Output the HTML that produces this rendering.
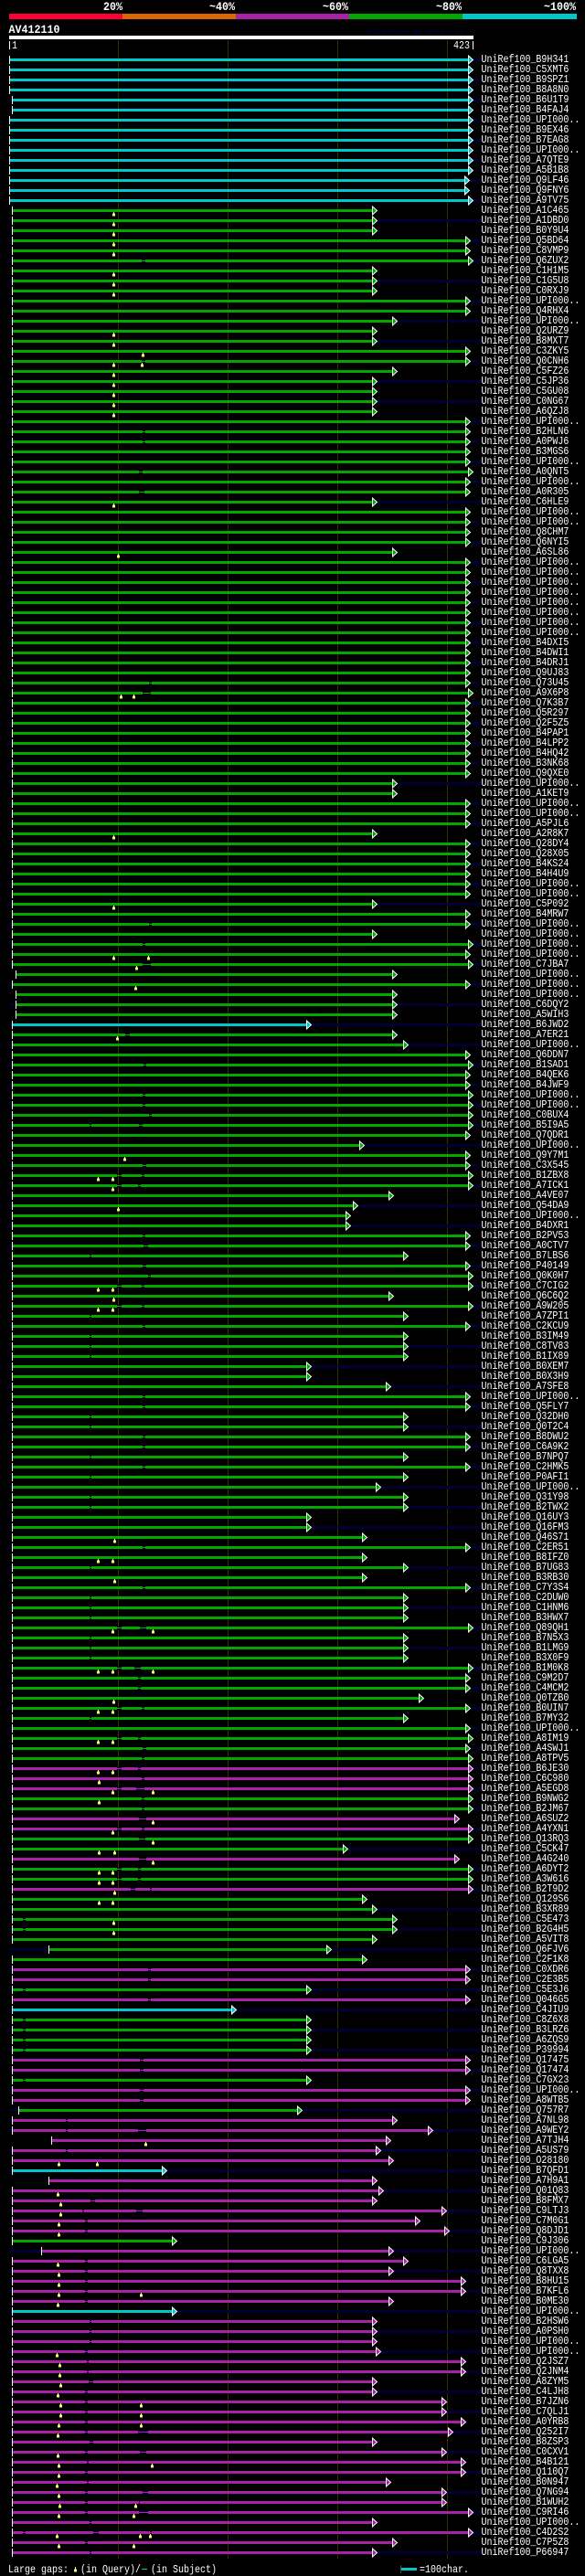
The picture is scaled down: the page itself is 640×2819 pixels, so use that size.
<!DOCTYPE html>
<html><head><meta charset="utf-8"><title>AV412110</title>
<style>
html,body{margin:0;padding:0;background:#000;width:640px;height:2819px;overflow:hidden}
body{position:relative}
#ov{position:absolute;left:0;top:0;width:640px;height:2819px}
#ov text{font-family:"Liberation Mono",monospace;fill:#fff;font-size:12px}
#ov text.b{font-weight:bold;font-size:12.5px}
#st{position:absolute;left:10px;top:64px;width:516px;height:2731px;background:repeating-linear-gradient(to bottom,#000033 0,#000033 3px,transparent 3px,transparent 22px)}
#rows{position:absolute;left:0;top:60px;width:640px}
.c,.g,.p{display:block;width:640px;height:11px;overflow:visible;shape-rendering:crispEdges}
.c text,.g text,.p text{font:12px "Liberation Mono",monospace;fill:#fff;transform:translate(526.5px,8px) scaleX(.8333)}
.c path,.g path,.p path{fill:none;stroke-width:3;marker-start:url(#s)}
.c path{stroke:#00c8c8;marker-end:url(#mc)}
.g path{stroke:#00a800;marker-end:url(#mg)}
.p path{stroke:#a822a8;marker-end:url(#mp)}
path.t{stroke-width:1!important;marker:none!important}
</style></head><body>
<svg width="0" height="0" style="position:absolute"><defs>
<marker id="s" markerUnits="userSpaceOnUse" markerWidth="4" markerHeight="12" refX="0" refY="0" overflow="visible"><path d="M.5 -4.5V4.5" style="fill:none;stroke:#fff;stroke-width:1;marker:none"/></marker>
<marker id="mc" markerUnits="userSpaceOnUse" markerWidth="8" markerHeight="12" refX="0" refY="0" overflow="visible"><path d="M.5 -4.5V4.5L5.5 0Z" style="fill:#00c8c8;stroke:#fff;stroke-width:1;marker:none"/></marker>
<marker id="mg" markerUnits="userSpaceOnUse" markerWidth="8" markerHeight="12" refX="0" refY="0" overflow="visible"><path d="M.5 -4.5V4.5L5.5 0Z" style="fill:#00a800;stroke:#fff;stroke-width:1;marker:none"/></marker>
<marker id="mp" markerUnits="userSpaceOnUse" markerWidth="8" markerHeight="12" refX="0" refY="0" overflow="visible"><path d="M.5 -4.5V4.5L5.5 0Z" style="fill:#a822a8;stroke:#fff;stroke-width:1;marker:none"/></marker>
<path id="y" d="M-1.5 8.5h3v3h-3zM-.5 7h1v2h-1z" style="fill:#ffff66;stroke:none;marker:none"/>
</defs></svg>

<svg id="ov" viewBox="0 0 640 2819" shape-rendering="crispEdges">
<rect x="10" y="15" width="124" height="6" fill="#ff0033"/>
<rect x="134" y="15" width="124" height="6" fill="#dd6600"/>
<rect x="258" y="15" width="124" height="6" fill="#a822a8"/>
<rect x="382" y="15" width="124" height="6" fill="#00a800"/>
<rect x="506" y="15" width="125" height="6" fill="#00c8c8"/>
<text class="b" x="113" y="11" textLength="21" lengthAdjust="spacingAndGlyphs">20%</text>
<text class="b" x="229" y="11" textLength="28" lengthAdjust="spacingAndGlyphs">~40%</text>
<text class="b" x="353" y="11" textLength="28" lengthAdjust="spacingAndGlyphs">~60%</text>
<text class="b" x="477" y="11" textLength="28" lengthAdjust="spacingAndGlyphs">~80%</text>
<text class="b" x="595" y="11" textLength="35" lengthAdjust="spacingAndGlyphs">~100%</text>
<text class="b" x="9.5" y="36" textLength="56" lengthAdjust="spacingAndGlyphs">AV412110</text>
<text x="402" y="37" textLength="115" lengthAdjust="spacingAndGlyphs" style="fill:#000044;font-size:8.4px">AlignView.pm Beta rel.7</text>
<rect x="10" y="39" width="508" height="4" fill="#fff"/>
<rect x="10" y="45" width="1" height="9" fill="#fff"/>
<rect x="517" y="45" width="1" height="9" fill="#fff"/>
<text x="13" y="53" textLength="6" lengthAdjust="spacingAndGlyphs">1</text>
<text x="496" y="53" textLength="18" lengthAdjust="spacingAndGlyphs">423</text>
<rect x="129" y="44" width="1" height="2756" fill="#333300"/>
<rect x="249" y="44" width="1" height="2756" fill="#333300"/>
<rect x="369" y="44" width="1" height="2756" fill="#333300"/>
<rect x="489" y="44" width="1" height="2756" fill="#333300"/>
<text x="9" y="2815" textLength="66" lengthAdjust="spacingAndGlyphs">Large gaps:</text>
<path d="M81 2811.5h3v3h-3zM82 2809h1v3h-1z" fill="#ffff66"/>
<text x="88" y="2815" textLength="66" lengthAdjust="spacingAndGlyphs">(in Query)/</text>
<rect x="155" y="2811" width="6" height="1" fill="#00c8c8"/>
<text x="165" y="2815" textLength="72" lengthAdjust="spacingAndGlyphs">(in Subject)</text>
<rect x="438" y="2807" width="1" height="9" fill="#444"/>
<rect x="439" y="2810" width="17" height="3" fill="#00c8c8"/>
<text x="459" y="2815" textLength="54" lengthAdjust="spacingAndGlyphs">=100char.</text>
</svg>
<div id="st"></div>
<div id="rows">
<svg class="c"><path d="M10 5.5H512"/><text>UniRef100_B9H341</text></svg>
<svg class="c"><path d="M10 5.5H512"/><text>UniRef100_C5XMT6</text></svg>
<svg class="c"><path d="M10 5.5H512"/><text>UniRef100_B9SPZ1</text></svg>
<svg class="c"><path d="M10 5.5H512"/><text>UniRef100_B8A8N0</text></svg>
<svg class="c"><path d="M13 5.5H512"/><text>UniRef100_B6U1T9</text></svg>
<svg class="c"><path d="M13 5.5H512"/><text>UniRef100_B4FAJ4</text></svg>
<svg class="c"><path d="M10 5.5H512"/><text>UniRef100_UPI000..</text></svg>
<svg class="c"><path d="M10 5.5H512"/><text>UniRef100_B9EX46</text></svg>
<svg class="c"><path d="M10 5.5H512"/><text>UniRef100_B7EAG8</text></svg>
<svg class="c"><path d="M10 5.5H512"/><text>UniRef100_UPI000..</text></svg>
<svg class="c"><path d="M10 5.5H512"/><text>UniRef100_A7QTE9</text></svg>
<svg class="c"><path d="M10 5.5H512"/><text>UniRef100_A5B1B8</text></svg>
<svg class="c"><path d="M10 5.5H508"/><text>UniRef100_Q9LF46</text></svg>
<svg class="c"><path d="M10 5.5H508"/><text>UniRef100_Q9FNY6</text></svg>
<svg class="c"><path d="M10 5.5H512"/><text>UniRef100_A9TV75</text></svg>
<svg class="g"><path d="M13 5.5H407"/><use href="#y" x="124.5"/><text>UniRef100_A1C465</text></svg>
<svg class="g"><path d="M13 5.5H407"/><use href="#y" x="124.5"/><text>UniRef100_A1DBD0</text></svg>
<svg class="g"><path d="M13 5.5H407"/><use href="#y" x="124.5"/><text>UniRef100_B0Y9U4</text></svg>
<svg class="g"><path d="M13 5.5H509"/><use href="#y" x="124.5"/><text>UniRef100_Q5BD64</text></svg>
<svg class="g"><path d="M13 5.5H509"/><use href="#y" x="124.5"/><text>UniRef100_C8VMP9</text></svg>
<svg class="g"><path d="M13 5.5H155M159 5.5H512"/><path class="t" d="M155 5.5H159"/><text>UniRef100_Q6ZUX2</text></svg>
<svg class="g"><path d="M13 5.5H407"/><use href="#y" x="124.5"/><text>UniRef100_C1H1M5</text></svg>
<svg class="g"><path d="M13 5.5H407"/><use href="#y" x="124.5"/><text>UniRef100_C1G5U8</text></svg>
<svg class="g"><path d="M13 5.5H407"/><use href="#y" x="124.5"/><text>UniRef100_C0RXJ9</text></svg>
<svg class="g"><path d="M13 5.5H509"/><text>UniRef100_UPI000..</text></svg>
<svg class="g"><path d="M13 5.5H509"/><text>UniRef100_Q4RHX4</text></svg>
<svg class="g"><path d="M13 5.5H429"/><text>UniRef100_UPI000..</text></svg>
<svg class="g"><path d="M13 5.5H407"/><use href="#y" x="124.5"/><text>UniRef100_Q2URZ9</text></svg>
<svg class="g"><path d="M13 5.5H407"/><use href="#y" x="124.5"/><text>UniRef100_B8MXT7</text></svg>
<svg class="g"><path d="M13 5.5H509"/><use href="#y" x="156.5"/><text>UniRef100_C3ZKY5</text></svg>
<svg class="g"><path d="M13 5.5H155M159 5.5H509"/><path class="t" d="M155 5.5H159"/><use href="#y" x="124.5"/><use href="#y" x="155.5"/><text>UniRef100_Q0CNH6</text></svg>
<svg class="g"><path d="M13 5.5H429"/><use href="#y" x="124.5"/><text>UniRef100_C5FZ26</text></svg>
<svg class="g"><path d="M13 5.5H407"/><use href="#y" x="124.5"/><text>UniRef100_C5JP36</text></svg>
<svg class="g"><path d="M13 5.5H407"/><use href="#y" x="124.5"/><text>UniRef100_C5GU08</text></svg>
<svg class="g"><path d="M13 5.5H407"/><use href="#y" x="124.5"/><text>UniRef100_C0NG67</text></svg>
<svg class="g"><path d="M13 5.5H407"/><use href="#y" x="124.5"/><text>UniRef100_A6QZJ8</text></svg>
<svg class="g"><path d="M13 5.5H509"/><text>UniRef100_UPI000..</text></svg>
<svg class="g"><path d="M13 5.5H156M159 5.5H509"/><path class="t" d="M156 5.5H159"/><text>UniRef100_B2HLN6</text></svg>
<svg class="g"><path d="M13 5.5H156M159 5.5H509"/><path class="t" d="M156 5.5H159"/><text>UniRef100_A0PWJ6</text></svg>
<svg class="g"><path d="M13 5.5H509"/><text>UniRef100_B3MGS6</text></svg>
<svg class="g"><path d="M13 5.5H509"/><text>UniRef100_UPI000..</text></svg>
<svg class="g"><path d="M13 5.5H152M156 5.5H512"/><path class="t" d="M152 5.5H156"/><text>UniRef100_A0QNT5</text></svg>
<svg class="g"><path d="M13 5.5H509"/><text>UniRef100_UPI000..</text></svg>
<svg class="g"><path d="M13 5.5H152M158 5.5H509"/><path class="t" d="M152 5.5H158"/><text>UniRef100_A0R305</text></svg>
<svg class="g"><path d="M13 5.5H407"/><use href="#y" x="124.5"/><text>UniRef100_C6HLE9</text></svg>
<svg class="g"><path d="M13 5.5H509"/><text>UniRef100_UPI000..</text></svg>
<svg class="g"><path d="M13 5.5H509"/><text>UniRef100_UPI000..</text></svg>
<svg class="g"><path d="M13 5.5H509"/><text>UniRef100_Q8CHM7</text></svg>
<svg class="g"><path d="M13 5.5H509"/><text>UniRef100_Q6NYI5</text></svg>
<svg class="g"><path d="M13 5.5H429"/><use href="#y" x="129.5"/><text>UniRef100_A6SL86</text></svg>
<svg class="g"><path d="M13 5.5H509"/><text>UniRef100_UPI000..</text></svg>
<svg class="g"><path d="M13 5.5H509"/><text>UniRef100_UPI000..</text></svg>
<svg class="g"><path d="M13 5.5H509"/><text>UniRef100_UPI000..</text></svg>
<svg class="g"><path d="M13 5.5H509"/><text>UniRef100_UPI000..</text></svg>
<svg class="g"><path d="M13 5.5H509"/><text>UniRef100_UPI000..</text></svg>
<svg class="g"><path d="M13 5.5H509"/><text>UniRef100_UPI000..</text></svg>
<svg class="g"><path d="M13 5.5H509"/><text>UniRef100_UPI000..</text></svg>
<svg class="g"><path d="M13 5.5H509"/><text>UniRef100_UPI000..</text></svg>
<svg class="g"><path d="M13 5.5H509"/><text>UniRef100_B4DXI5</text></svg>
<svg class="g"><path d="M13 5.5H509"/><text>UniRef100_B4DWI1</text></svg>
<svg class="g"><path d="M13 5.5H509"/><text>UniRef100_B4DRJ1</text></svg>
<svg class="g"><path d="M13 5.5H509"/><text>UniRef100_Q9UJ83</text></svg>
<svg class="g"><path d="M13 5.5H163M166 5.5H509"/><path class="t" d="M163 5.5H166"/><text>UniRef100_Q73U45</text></svg>
<svg class="g"><path d="M13 5.5H156M165 5.5H512"/><path class="t" d="M156 5.5H165"/><use href="#y" x="132.5"/><use href="#y" x="146.5"/><text>UniRef100_A9X6P8</text></svg>
<svg class="g"><path d="M13 5.5H509"/><text>UniRef100_Q7K3B7</text></svg>
<svg class="g"><path d="M13 5.5H509"/><text>UniRef100_Q5R297</text></svg>
<svg class="g"><path d="M13 5.5H509"/><text>UniRef100_Q2F5Z5</text></svg>
<svg class="g"><path d="M13 5.5H509"/><text>UniRef100_B4PAP1</text></svg>
<svg class="g"><path d="M13 5.5H509"/><text>UniRef100_B4LPP2</text></svg>
<svg class="g"><path d="M13 5.5H509"/><text>UniRef100_B4HQ42</text></svg>
<svg class="g"><path d="M13 5.5H509"/><text>UniRef100_B3NK68</text></svg>
<svg class="g"><path d="M13 5.5H509"/><text>UniRef100_Q9QXE0</text></svg>
<svg class="g"><path d="M13 5.5H429"/><text>UniRef100_UPI000..</text></svg>
<svg class="g"><path d="M13 5.5H429"/><text>UniRef100_A1KET9</text></svg>
<svg class="g"><path d="M13 5.5H509"/><text>UniRef100_UPI000..</text></svg>
<svg class="g"><path d="M13 5.5H509"/><text>UniRef100_UPI000..</text></svg>
<svg class="g"><path d="M13 5.5H509"/><text>UniRef100_A5PJL6</text></svg>
<svg class="g"><path d="M13 5.5H407"/><use href="#y" x="124.5"/><text>UniRef100_A2R8K7</text></svg>
<svg class="g"><path d="M13 5.5H509"/><text>UniRef100_Q28DY4</text></svg>
<svg class="g"><path d="M13 5.5H509"/><text>UniRef100_Q28X05</text></svg>
<svg class="g"><path d="M13 5.5H509"/><text>UniRef100_B4KS24</text></svg>
<svg class="g"><path d="M13 5.5H509"/><text>UniRef100_B4H4U9</text></svg>
<svg class="g"><path d="M13 5.5H509"/><text>UniRef100_UPI000..</text></svg>
<svg class="g"><path d="M13 5.5H509"/><text>UniRef100_UPI000..</text></svg>
<svg class="g"><path d="M13 5.5H407"/><use href="#y" x="124.5"/><text>UniRef100_C5P092</text></svg>
<svg class="g"><path d="M13 5.5H509"/><text>UniRef100_B4MRW7</text></svg>
<svg class="g"><path d="M13 5.5H163M166 5.5H509"/><path class="t" d="M163 5.5H166"/><text>UniRef100_UPI000..</text></svg>
<svg class="g"><path d="M13 5.5H407"/><text>UniRef100_UPI000..</text></svg>
<svg class="g"><path d="M13 5.5H156M159 5.5H512"/><path class="t" d="M156 5.5H159"/><text>UniRef100_UPI000..</text></svg>
<svg class="g"><path d="M13 5.5H509"/><use href="#y" x="124.5"/><use href="#y" x="162.5"/><text>UniRef100_UPI000..</text></svg>
<svg class="g"><path d="M13 5.5H156M165 5.5H512"/><path class="t" d="M156 5.5H165"/><use href="#y" x="149.5"/><text>UniRef100_C7JBA7</text></svg>
<svg class="g"><path d="M17 5.5H429"/><text>UniRef100_UPI000..</text></svg>
<svg class="g"><path d="M13 5.5H509"/><use href="#y" x="148.5"/><text>UniRef100_UPI000..</text></svg>
<svg class="g"><path d="M17 5.5H429"/><text>UniRef100_UPI000..</text></svg>
<svg class="g"><path d="M17 5.5H429"/><text>UniRef100_C6DQY2</text></svg>
<svg class="g"><path d="M17 5.5H429"/><text>UniRef100_A5WIH3</text></svg>
<svg class="c"><path d="M13 5.5H335"/><text>UniRef100_B6JWD2</text></svg>
<svg class="g"><path d="M13 5.5H137M142 5.5H429"/><path class="t" d="M137 5.5H142"/><use href="#y" x="128.5"/><text>UniRef100_A7ER21</text></svg>
<svg class="g"><path d="M13 5.5H441"/><text>UniRef100_UPI000..</text></svg>
<svg class="g"><path d="M13 5.5H509"/><text>UniRef100_Q6DDN7</text></svg>
<svg class="g"><path d="M13 5.5H157M160 5.5H512"/><path class="t" d="M157 5.5H160"/><text>UniRef100_B1SAD1</text></svg>
<svg class="g"><path d="M13 5.5H509"/><text>UniRef100_B4QEK6</text></svg>
<svg class="g"><path d="M13 5.5H509"/><text>UniRef100_B4JWF9</text></svg>
<svg class="g"><path d="M13 5.5H156M159 5.5H512"/><path class="t" d="M156 5.5H159"/><text>UniRef100_UPI000..</text></svg>
<svg class="g"><path d="M13 5.5H156M159 5.5H512"/><path class="t" d="M156 5.5H159"/><text>UniRef100_UPI000..</text></svg>
<svg class="g"><path d="M13 5.5H163M166 5.5H512"/><path class="t" d="M163 5.5H166"/><text>UniRef100_C0BUX4</text></svg>
<svg class="g"><path d="M13 5.5H98M100 5.5H152M156 5.5H512"/><path class="t" d="M98 5.5H100M152 5.5H156"/><text>UniRef100_B5I9A5</text></svg>
<svg class="g"><path d="M13 5.5H509"/><text>UniRef100_Q7QDR1</text></svg>
<svg class="g"><path d="M13 5.5H393"/><text>UniRef100_UPI000..</text></svg>
<svg class="g"><path d="M13 5.5H509"/><use href="#y" x="136.5"/><text>UniRef100_Q9Y7M1</text></svg>
<svg class="g"><path d="M13 5.5H156M160 5.5H509"/><path class="t" d="M156 5.5H160"/><text>UniRef100_C3X545</text></svg>
<svg class="g"><path d="M13 5.5H128M133 5.5H155M158 5.5H512"/><path class="t" d="M128 5.5H133M155 5.5H158"/><use href="#y" x="107.5"/><use href="#y" x="123.5"/><text>UniRef100_B1ZBX8</text></svg>
<svg class="g"><path d="M13 5.5H128M133 5.5H151M154 5.5H512"/><path class="t" d="M128 5.5H133M151 5.5H154"/><use href="#y" x="123.5"/><text>UniRef100_A7ICK1</text></svg>
<svg class="g"><path d="M13 5.5H425"/><text>UniRef100_A4VE07</text></svg>
<svg class="g"><path d="M13 5.5H386"/><use href="#y" x="129.5"/><text>UniRef100_Q54DA9</text></svg>
<svg class="g"><path d="M13 5.5H378"/><text>UniRef100_UPI000..</text></svg>
<svg class="g"><path d="M13 5.5H378"/><text>UniRef100_B4DXR1</text></svg>
<svg class="g"><path d="M13 5.5H156M159 5.5H509"/><path class="t" d="M156 5.5H159"/><text>UniRef100_B2PV53</text></svg>
<svg class="g"><path d="M13 5.5H157M162 5.5H509"/><path class="t" d="M157 5.5H162"/><text>UniRef100_A0CTV7</text></svg>
<svg class="g"><path d="M13 5.5H98M100 5.5H441"/><path class="t" d="M98 5.5H100"/><text>UniRef100_B7LBS6</text></svg>
<svg class="g"><path d="M13 5.5H156M160 5.5H509"/><path class="t" d="M156 5.5H160"/><text>UniRef100_P40149</text></svg>
<svg class="g"><path d="M13 5.5H162M165 5.5H512"/><path class="t" d="M162 5.5H165"/><text>UniRef100_Q0K0H7</text></svg>
<svg class="g"><path d="M13 5.5H128M133 5.5H155M158 5.5H512"/><path class="t" d="M128 5.5H133M155 5.5H158"/><use href="#y" x="107.5"/><use href="#y" x="123.5"/><text>UniRef100_C7CIG2</text></svg>
<svg class="g"><path d="M13 5.5H425"/><use href="#y" x="124.5"/><text>UniRef100_Q6C6Q2</text></svg>
<svg class="g"><path d="M13 5.5H128M133 5.5H155M158 5.5H512"/><path class="t" d="M128 5.5H133M155 5.5H158"/><use href="#y" x="107.5"/><use href="#y" x="123.5"/><text>UniRef100_A9W205</text></svg>
<svg class="g"><path d="M13 5.5H98M100 5.5H441"/><path class="t" d="M98 5.5H100"/><text>UniRef100_A7ZPI1</text></svg>
<svg class="g"><path d="M13 5.5H156M159 5.5H509"/><path class="t" d="M156 5.5H159"/><text>UniRef100_C2KCU9</text></svg>
<svg class="g"><path d="M13 5.5H98M100 5.5H441"/><path class="t" d="M98 5.5H100"/><text>UniRef100_B3IM49</text></svg>
<svg class="g"><path d="M13 5.5H98M100 5.5H441"/><path class="t" d="M98 5.5H100"/><text>UniRef100_C8TV83</text></svg>
<svg class="g"><path d="M13 5.5H98M100 5.5H441"/><path class="t" d="M98 5.5H100"/><text>UniRef100_B1IX89</text></svg>
<svg class="g"><path d="M13 5.5H335"/><text>UniRef100_B0XEM7</text></svg>
<svg class="g"><path d="M13 5.5H335"/><text>UniRef100_B0X3H9</text></svg>
<svg class="g"><path d="M13 5.5H422"/><text>UniRef100_A7SFE8</text></svg>
<svg class="g"><path d="M13 5.5H156M159 5.5H509"/><path class="t" d="M156 5.5H159"/><text>UniRef100_UPI000..</text></svg>
<svg class="g"><path d="M13 5.5H156M159 5.5H509"/><path class="t" d="M156 5.5H159"/><text>UniRef100_Q5FLY7</text></svg>
<svg class="g"><path d="M13 5.5H98M100 5.5H441"/><path class="t" d="M98 5.5H100"/><text>UniRef100_Q32DH0</text></svg>
<svg class="g"><path d="M13 5.5H98M100 5.5H441"/><path class="t" d="M98 5.5H100"/><text>UniRef100_Q0T2C4</text></svg>
<svg class="g"><path d="M13 5.5H156M159 5.5H509"/><path class="t" d="M156 5.5H159"/><text>UniRef100_B8DWU2</text></svg>
<svg class="g"><path d="M13 5.5H156M159 5.5H509"/><path class="t" d="M156 5.5H159"/><text>UniRef100_C6A9K2</text></svg>
<svg class="g"><path d="M13 5.5H98M100 5.5H441"/><path class="t" d="M98 5.5H100"/><text>UniRef100_B7NPQ7</text></svg>
<svg class="g"><path d="M13 5.5H156M159 5.5H509"/><path class="t" d="M156 5.5H159"/><text>UniRef100_C2HMK5</text></svg>
<svg class="g"><path d="M13 5.5H98M100 5.5H441"/><path class="t" d="M98 5.5H100"/><text>UniRef100_P0AFI1</text></svg>
<svg class="g"><path d="M13 5.5H411"/><text>UniRef100_UPI000..</text></svg>
<svg class="g"><path d="M13 5.5H98M100 5.5H441"/><path class="t" d="M98 5.5H100"/><text>UniRef100_Q31Y98</text></svg>
<svg class="g"><path d="M13 5.5H98M100 5.5H441"/><path class="t" d="M98 5.5H100"/><text>UniRef100_B2TWX2</text></svg>
<svg class="g"><path d="M13 5.5H335"/><text>UniRef100_Q16UY3</text></svg>
<svg class="g"><path d="M13 5.5H335"/><text>UniRef100_Q16FM3</text></svg>
<svg class="g"><path d="M13 5.5H396"/><use href="#y" x="125.5"/><text>UniRef100_Q46S71</text></svg>
<svg class="g"><path d="M13 5.5H156M159 5.5H509"/><path class="t" d="M156 5.5H159"/><text>UniRef100_C2ER51</text></svg>
<svg class="g"><path d="M13 5.5H396"/><use href="#y" x="107.5"/><use href="#y" x="123.5"/><text>UniRef100_B8IFZ0</text></svg>
<svg class="g"><path d="M13 5.5H98M100 5.5H441"/><path class="t" d="M98 5.5H100"/><text>UniRef100_B7UG83</text></svg>
<svg class="g"><path d="M13 5.5H396"/><use href="#y" x="125.5"/><text>UniRef100_B3RB30</text></svg>
<svg class="g"><path d="M13 5.5H156M159 5.5H509"/><path class="t" d="M156 5.5H159"/><text>UniRef100_C7Y3S4</text></svg>
<svg class="g"><path d="M13 5.5H98M100 5.5H441"/><path class="t" d="M98 5.5H100"/><text>UniRef100_C2DUW0</text></svg>
<svg class="g"><path d="M13 5.5H98M100 5.5H441"/><path class="t" d="M98 5.5H100"/><text>UniRef100_C1HNM6</text></svg>
<svg class="g"><path d="M13 5.5H98M100 5.5H441"/><path class="t" d="M98 5.5H100"/><text>UniRef100_B3HWX7</text></svg>
<svg class="g"><path d="M13 5.5H128M133 5.5H153M160 5.5H512"/><path class="t" d="M128 5.5H133M153 5.5H160"/><use href="#y" x="123.5"/><use href="#y" x="167.5"/><text>UniRef100_Q89QH1</text></svg>
<svg class="g"><path d="M13 5.5H98M100 5.5H441"/><path class="t" d="M98 5.5H100"/><text>UniRef100_B7N5X3</text></svg>
<svg class="g"><path d="M13 5.5H98M100 5.5H441"/><path class="t" d="M98 5.5H100"/><text>UniRef100_B1LMG9</text></svg>
<svg class="g"><path d="M13 5.5H98M100 5.5H441"/><path class="t" d="M98 5.5H100"/><text>UniRef100_B3X0F9</text></svg>
<svg class="g"><path d="M13 5.5H128M133 5.5H147M154 5.5H512"/><path class="t" d="M128 5.5H133M147 5.5H154"/><use href="#y" x="107.5"/><use href="#y" x="123.5"/><use href="#y" x="167.5"/><text>UniRef100_B1M0K8</text></svg>
<svg class="g"><path d="M13 5.5H151M154 5.5H509"/><path class="t" d="M151 5.5H154"/><text>UniRef100_C9M2D7</text></svg>
<svg class="g"><path d="M13 5.5H151M154 5.5H509"/><path class="t" d="M151 5.5H154"/><text>UniRef100_C4MCM2</text></svg>
<svg class="g"><path d="M13 5.5H458"/><use href="#y" x="124.5"/><text>UniRef100_Q0TZB0</text></svg>
<svg class="g"><path d="M13 5.5H128M133 5.5H155M158 5.5H509"/><path class="t" d="M128 5.5H133M155 5.5H158"/><use href="#y" x="107.5"/><use href="#y" x="123.5"/><text>UniRef100_B0UIN7</text></svg>
<svg class="g"><path d="M13 5.5H98M100 5.5H441"/><path class="t" d="M98 5.5H100"/><text>UniRef100_B7MY32</text></svg>
<svg class="g"><path d="M13 5.5H509"/><text>UniRef100_UPI000..</text></svg>
<svg class="g"><path d="M13 5.5H128M133 5.5H151M154 5.5H512"/><path class="t" d="M128 5.5H133M151 5.5H154"/><use href="#y" x="107.5"/><use href="#y" x="123.5"/><text>UniRef100_A8IM19</text></svg>
<svg class="g"><path d="M13 5.5H156M160 5.5H509"/><path class="t" d="M156 5.5H160"/><text>UniRef100_A4SWJ1</text></svg>
<svg class="g"><path d="M13 5.5H155M158 5.5H512"/><path class="t" d="M155 5.5H158"/><text>UniRef100_A8TPV5</text></svg>
<svg class="p"><path d="M13 5.5H128M133 5.5H151M154 5.5H512"/><path class="t" d="M128 5.5H133M151 5.5H154"/><use href="#y" x="107.5"/><use href="#y" x="123.5"/><text>UniRef100_B6JE30</text></svg>
<svg class="p"><path d="M13 5.5H155M158 5.5H512"/><path class="t" d="M155 5.5H158"/><use href="#y" x="108.5"/><text>UniRef100_C6C980</text></svg>
<svg class="p"><path d="M13 5.5H128M133 5.5H149M158 5.5H512"/><path class="t" d="M128 5.5H133M149 5.5H158"/><use href="#y" x="123.5"/><use href="#y" x="167.5"/><text>UniRef100_A5EGD8</text></svg>
<svg class="g"><path d="M13 5.5H155M158 5.5H512"/><path class="t" d="M155 5.5H158"/><use href="#y" x="108.5"/><text>UniRef100_B9NWG2</text></svg>
<svg class="g"><path d="M13 5.5H155M158 5.5H512"/><path class="t" d="M155 5.5H158"/><text>UniRef100_B2JM67</text></svg>
<svg class="p"><path d="M13 5.5H152M160 5.5H497"/><path class="t" d="M152 5.5H160"/><use href="#y" x="167.5"/><text>UniRef100_A6SUZ2</text></svg>
<svg class="p"><path d="M13 5.5H128M133 5.5H155M158 5.5H512"/><path class="t" d="M128 5.5H133M155 5.5H158"/><use href="#y" x="123.5"/><text>UniRef100_A4YXN1</text></svg>
<svg class="g"><path d="M13 5.5H152M159 5.5H512"/><path class="t" d="M152 5.5H159"/><use href="#y" x="167.5"/><text>UniRef100_Q13RQ3</text></svg>
<svg class="g"><path d="M13 5.5H375"/><use href="#y" x="108.5"/><use href="#y" x="125.5"/><text>UniRef100_C5CK47</text></svg>
<svg class="p"><path d="M13 5.5H152M160 5.5H497"/><path class="t" d="M152 5.5H160"/><use href="#y" x="167.5"/><text>UniRef100_A4G240</text></svg>
<svg class="g"><path d="M13 5.5H128M133 5.5H151M154 5.5H512"/><path class="t" d="M128 5.5H133M151 5.5H154"/><use href="#y" x="108.5"/><use href="#y" x="123.5"/><text>UniRef100_A6DYT2</text></svg>
<svg class="g"><path d="M13 5.5H128M133 5.5H151M154 5.5H512"/><path class="t" d="M128 5.5H133M151 5.5H154"/><use href="#y" x="108.5"/><use href="#y" x="123.5"/><text>UniRef100_A3W616</text></svg>
<svg class="p"><path d="M13 5.5H143M148 5.5H164M166 5.5H512"/><path class="t" d="M143 5.5H148M164 5.5H166"/><use href="#y" x="125.5"/><text>UniRef100_B2T9D2</text></svg>
<svg class="g"><path d="M13 5.5H396"/><use href="#y" x="108.5"/><use href="#y" x="123.5"/><text>UniRef100_Q129S6</text></svg>
<svg class="g"><path d="M13 5.5H407"/><text>UniRef100_B3XR89</text></svg>
<svg class="g"><path d="M13 5.5H25M28 5.5H429"/><path class="t" d="M25 5.5H28"/><use href="#y" x="124.5"/><text>UniRef100_C5E473</text></svg>
<svg class="g"><path d="M13 5.5H25M28 5.5H429"/><path class="t" d="M25 5.5H28"/><use href="#y" x="124.5"/><text>UniRef100_B2G4H5</text></svg>
<svg class="g"><path d="M13 5.5H407"/><text>UniRef100_A5VIT8</text></svg>
<svg class="g"><path d="M53 5.5H357"/><text>UniRef100_Q6FJV6</text></svg>
<svg class="g"><path d="M13 5.5H396"/><text>UniRef100_C2F1K8</text></svg>
<svg class="p"><path d="M13 5.5H162M165 5.5H509"/><path class="t" d="M162 5.5H165"/><text>UniRef100_C0XDR6</text></svg>
<svg class="p"><path d="M13 5.5H162M165 5.5H509"/><path class="t" d="M162 5.5H165"/><text>UniRef100_C2E3B5</text></svg>
<svg class="g"><path d="M13 5.5H25M28 5.5H335"/><path class="t" d="M25 5.5H28"/><text>UniRef100_C5E3J6</text></svg>
<svg class="p"><path d="M13 5.5H162M165 5.5H509"/><path class="t" d="M162 5.5H165"/><text>UniRef100_Q046G5</text></svg>
<svg class="c"><path d="M13 5.5H253"/><text>UniRef100_C4JIU9</text></svg>
<svg class="g"><path d="M13 5.5H25M28 5.5H335"/><path class="t" d="M25 5.5H28"/><text>UniRef100_C8Z6X8</text></svg>
<svg class="g"><path d="M13 5.5H25M28 5.5H335"/><path class="t" d="M25 5.5H28"/><text>UniRef100_B3LRZ6</text></svg>
<svg class="g"><path d="M13 5.5H25M28 5.5H335"/><path class="t" d="M25 5.5H28"/><text>UniRef100_A6ZQS9</text></svg>
<svg class="g"><path d="M13 5.5H25M28 5.5H335"/><path class="t" d="M25 5.5H28"/><text>UniRef100_P39994</text></svg>
<svg class="p"><path d="M13 5.5H153M157 5.5H509"/><path class="t" d="M153 5.5H157"/><text>UniRef100_Q17475</text></svg>
<svg class="p"><path d="M13 5.5H153M157 5.5H509"/><path class="t" d="M153 5.5H157"/><text>UniRef100_Q17474</text></svg>
<svg class="g"><path d="M13 5.5H25M28 5.5H335"/><path class="t" d="M25 5.5H28"/><text>UniRef100_C7GX23</text></svg>
<svg class="p"><path d="M13 5.5H153M157 5.5H509"/><path class="t" d="M153 5.5H157"/><text>UniRef100_UPI000..</text></svg>
<svg class="p"><path d="M13 5.5H153M157 5.5H509"/><path class="t" d="M153 5.5H157"/><text>UniRef100_A8WTB5</text></svg>
<svg class="g"><path d="M20 5.5H325"/><text>UniRef100_Q757R7</text></svg>
<svg class="p"><path d="M13 5.5H72M74 5.5H429"/><path class="t" d="M72 5.5H74"/><text>UniRef100_A7NL98</text></svg>
<svg class="p"><path d="M13 5.5H72M74 5.5H151M160 5.5H468"/><path class="t" d="M72 5.5H74M151 5.5H160"/><text>UniRef100_A9WEY2</text></svg>
<svg class="p"><path d="M56 5.5H422"/><use href="#y" x="159.5"/><text>UniRef100_A7TJH4</text></svg>
<svg class="p"><path d="M13 5.5H72M74 5.5H411"/><path class="t" d="M72 5.5H74"/><text>UniRef100_A5US79</text></svg>
<svg class="p"><path d="M13 5.5H425"/><use href="#y" x="64.5"/><use href="#y" x="106.5"/><text>UniRef100_O28180</text></svg>
<svg class="c"><path d="M13 5.5H177"/><text>UniRef100_B7QFD1</text></svg>
<svg class="p"><path d="M53 5.5H407"/><text>UniRef100_A7H9A1</text></svg>
<svg class="p"><path d="M13 5.5H414"/><use href="#y" x="63.5"/><text>UniRef100_Q01Q83</text></svg>
<svg class="p"><path d="M13 5.5H99M104 5.5H407"/><path class="t" d="M99 5.5H104"/><use href="#y" x="66.5"/><text>UniRef100_B8FMX7</text></svg>
<svg class="p"><path d="M13 5.5H90M92 5.5H149M156 5.5H483"/><path class="t" d="M90 5.5H92M149 5.5H156"/><use href="#y" x="66.5"/><text>UniRef100_C9LTJ3</text></svg>
<svg class="p"><path d="M13 5.5H93M96 5.5H454"/><path class="t" d="M93 5.5H96"/><use href="#y" x="64.5"/><text>UniRef100_C7M0G1</text></svg>
<svg class="p"><path d="M13 5.5H93M96 5.5H486"/><path class="t" d="M93 5.5H96"/><use href="#y" x="64.5"/><text>UniRef100_Q8DJD1</text></svg>
<svg class="g"><path d="M13 5.5H188"/><text>UniRef100_C9J306</text></svg>
<svg class="p"><path d="M45 5.5H425"/><text>UniRef100_UPI000..</text></svg>
<svg class="p"><path d="M13 5.5H93M96 5.5H441"/><path class="t" d="M93 5.5H96"/><use href="#y" x="63.5"/><text>UniRef100_C6LGA5</text></svg>
<svg class="p"><path d="M13 5.5H93M96 5.5H425"/><path class="t" d="M93 5.5H96"/><use href="#y" x="64.5"/><text>UniRef100_Q8TXX8</text></svg>
<svg class="p"><path d="M13 5.5H93M96 5.5H504"/><path class="t" d="M93 5.5H96"/><use href="#y" x="64.5"/><text>UniRef100_B8HU15</text></svg>
<svg class="p"><path d="M13 5.5H93M96 5.5H504"/><path class="t" d="M93 5.5H96"/><use href="#y" x="64.5"/><use href="#y" x="154.5"/><text>UniRef100_B7KFL6</text></svg>
<svg class="p"><path d="M13 5.5H93M96 5.5H425"/><path class="t" d="M93 5.5H96"/><use href="#y" x="63.5"/><text>UniRef100_B0ME30</text></svg>
<svg class="c"><path d="M13 5.5H188"/><text>UniRef100_UPI000..</text></svg>
<svg class="p"><path d="M13 5.5H98M100 5.5H407"/><path class="t" d="M98 5.5H100"/><text>UniRef100_B2HSW6</text></svg>
<svg class="p"><path d="M13 5.5H98M100 5.5H407"/><path class="t" d="M98 5.5H100"/><text>UniRef100_A0PSH0</text></svg>
<svg class="p"><path d="M13 5.5H98M100 5.5H407"/><path class="t" d="M98 5.5H100"/><text>UniRef100_UPI000..</text></svg>
<svg class="p"><path d="M13 5.5H93M96 5.5H411"/><path class="t" d="M93 5.5H96"/><use href="#y" x="62.5"/><text>UniRef100_UPI000..</text></svg>
<svg class="p"><path d="M13 5.5H95M97 5.5H504"/><path class="t" d="M95 5.5H97"/><use href="#y" x="65.5"/><text>UniRef100_Q2JSZ7</text></svg>
<svg class="p"><path d="M13 5.5H95M97 5.5H504"/><path class="t" d="M95 5.5H97"/><use href="#y" x="65.5"/><text>UniRef100_Q2JNM4</text></svg>
<svg class="p"><path d="M13 5.5H97M102 5.5H407"/><path class="t" d="M97 5.5H102"/><use href="#y" x="66.5"/><text>UniRef100_A8ZYM5</text></svg>
<svg class="p"><path d="M13 5.5H93M96 5.5H407"/><path class="t" d="M93 5.5H96"/><use href="#y" x="63.5"/><text>UniRef100_C4LJH8</text></svg>
<svg class="p"><path d="M13 5.5H93M96 5.5H483"/><path class="t" d="M93 5.5H96"/><use href="#y" x="66.5"/><use href="#y" x="154.5"/><text>UniRef100_B7JZN6</text></svg>
<svg class="p"><path d="M13 5.5H93M96 5.5H483"/><path class="t" d="M93 5.5H96"/><use href="#y" x="66.5"/><use href="#y" x="154.5"/><text>UniRef100_C7QLJ1</text></svg>
<svg class="p"><path d="M13 5.5H93M96 5.5H504"/><path class="t" d="M93 5.5H96"/><use href="#y" x="64.5"/><use href="#y" x="154.5"/><text>UniRef100_A0YRB8</text></svg>
<svg class="p"><path d="M13 5.5H93M96 5.5H151M162 5.5H490"/><path class="t" d="M93 5.5H96M151 5.5H162"/><use href="#y" x="63.5"/><text>UniRef100_Q252I7</text></svg>
<svg class="p"><path d="M13 5.5H98M102 5.5H407"/><path class="t" d="M98 5.5H102"/><text>UniRef100_B8ZSP3</text></svg>
<svg class="p"><path d="M13 5.5H93M96 5.5H153M160 5.5H483"/><path class="t" d="M93 5.5H96M153 5.5H160"/><use href="#y" x="63.5"/><text>UniRef100_C0CXV1</text></svg>
<svg class="p"><path d="M13 5.5H95M97 5.5H504"/><path class="t" d="M95 5.5H97"/><use href="#y" x="64.5"/><use href="#y" x="166.5"/><text>UniRef100_B4B121</text></svg>
<svg class="p"><path d="M13 5.5H93M96 5.5H504"/><path class="t" d="M93 5.5H96"/><use href="#y" x="64.5"/><text>UniRef100_Q110Q7</text></svg>
<svg class="p"><path d="M13 5.5H95M97 5.5H422"/><path class="t" d="M95 5.5H97"/><use href="#y" x="62.5"/><text>UniRef100_B0N947</text></svg>
<svg class="p"><path d="M13 5.5H93M96 5.5H156M162 5.5H483"/><path class="t" d="M93 5.5H96M156 5.5H162"/><use href="#y" x="64.5"/><text>UniRef100_Q7NG94</text></svg>
<svg class="p"><path d="M13 5.5H93M96 5.5H152M153 5.5H483"/><path class="t" d="M93 5.5H96M152 5.5H153"/><use href="#y" x="65.5"/><use href="#y" x="148.5"/><text>UniRef100_B1WUH2</text></svg>
<svg class="p"><path d="M13 5.5H93M96 5.5H152M162 5.5H512"/><path class="t" d="M93 5.5H96M152 5.5H162"/><use href="#y" x="64.5"/><use href="#y" x="146.5"/><text>UniRef100_C9RI46</text></svg>
<svg class="p"><path d="M13 5.5H98M100 5.5H407"/><path class="t" d="M98 5.5H100"/><text>UniRef100_UPI000..</text></svg>
<svg class="p"><path d="M13 5.5H25M28 5.5H102M108 5.5H164M166 5.5H512"/><path class="t" d="M25 5.5H28M102 5.5H108M164 5.5H166"/><use href="#y" x="62.5"/><use href="#y" x="153.5"/><use href="#y" x="164.5"/><text>UniRef100_C4D2S2</text></svg>
<svg class="p"><path d="M13 5.5H93M96 5.5H429"/><path class="t" d="M93 5.5H96"/><use href="#y" x="64.5"/><use href="#y" x="146.5"/><text>UniRef100_C7P5Z8</text></svg>
<svg class="p"><path d="M13 5.5H98M100 5.5H407"/><path class="t" d="M98 5.5H100"/><text>UniRef100_P66947</text></svg>
</div>
</body></html>
